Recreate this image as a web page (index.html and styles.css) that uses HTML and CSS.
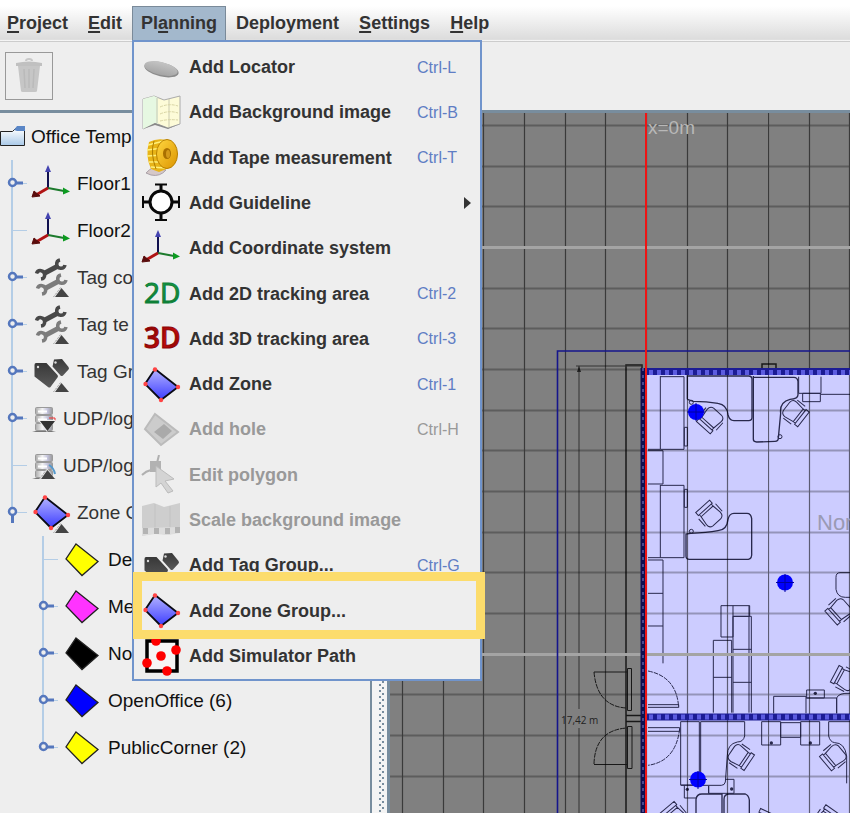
FILE: index.html
```html
<!DOCTYPE html>
<html lang="en">
<head>
<meta charset="utf-8">
<title>Office Template</title>
<link rel="stylesheet" href="styles.css">
</head>
<body>
<svg class="defs" width="0" height="0" aria-hidden="true">
  <defs>
    <linearGradient id="gZone" x1="0" y1="0" x2="0" y2="1"><stop offset="0" stop-color="#b4b4ff"/><stop offset="1" stop-color="#3c3cff"/></linearGradient>
    <linearGradient id="gDark" x1="0" y1="0" x2="0" y2="1"><stop offset="0" stop-color="#383838"/><stop offset="1" stop-color="#5a5a5a"/></linearGradient>
    <linearGradient id="gDisc" x1="0" y1="0" x2="0" y2="1"><stop offset="0" stop-color="#c4c4c4"/><stop offset="1" stop-color="#a4a4a4"/></linearGradient>
    <linearGradient id="gTape" x1="0" y1="0" x2="1" y2="1"><stop offset="0" stop-color="#ffd740"/><stop offset="1" stop-color="#dc9400"/></linearGradient>
    <linearGradient id="gGreen" x1="0" y1="0" x2="0" y2="1"><stop offset="0" stop-color="#1aa34a"/><stop offset="1" stop-color="#0a7430"/></linearGradient>
    <linearGradient id="gRed" x1="0" y1="0" x2="1" y2="1"><stop offset="0" stop-color="#700"/><stop offset=".6" stop-color="#c00a0a"/><stop offset="1" stop-color="#700"/></linearGradient>
    <linearGradient id="gFolder" x1="0" y1="0" x2="0" y2="1"><stop offset="0" stop-color="#fff"/><stop offset="1" stop-color="#a9c9e8"/></linearGradient>
    <linearGradient id="gSrv" x1="0" y1="0" x2="1" y2="0"><stop offset="0" stop-color="#aaa"/><stop offset=".4" stop-color="#f4f4f4"/><stop offset=".7" stop-color="#c4c4dc"/><stop offset="1" stop-color="#999"/></linearGradient>
    <symbol id="i-axes" viewBox="0 0 40 40">
      <path d="M17 24V6" stroke="#10104e" stroke-width="2"/><path d="M17 1l3 7h-6z" fill="#4444b0"/>
      <path d="M17 24l16 3" stroke="#1c7a2c" stroke-width="2"/><path d="M39 27.500l-7-4v7z" fill="#0c9a20"/>
      <path d="M17 24L5 31" stroke="#b01414" stroke-width="3"/><path d="M1 33l2-6 6 5z" fill="#5a0c0c" stroke="#5a0c0c"/>
    </symbol>
    <symbol id="i-zone" viewBox="0 0 40 40">
      <path d="M14 4L37 22 20 35 4 19z" fill="url(#gZone)" stroke="#0a0a14" stroke-width="1.800"/>
      <g fill="#f44"><circle cx="14" cy="4.500" r="2.200"/><circle cx="37" cy="22" r="2.200"/><circle cx="20" cy="35" r="2.200"/><circle cx="4.500" cy="19" r="2.200"/></g>
    </symbol>
    <symbol id="i-area" viewBox="0 0 40 40"><path d="M14 4L36 21.500 20 35.500 4 19z" stroke="#222" stroke-width="1.300"/></symbol>
    <symbol id="i-tags" viewBox="0 0 40 40">
      <path d="M5 11h10.500l11 12q1 1.200 0 2.500l-7 9.500q-1 1-2.500 0L3.500 24.500V13q0-2 1.500-2z" fill="url(#gDark)"/>
      <path d="M23 7.500l8-.5 6.500 8q1 1.500 0 2.500l-5.500 6q-1.500 1-2.500 0l-8-9z" fill="url(#gDark)"/>
      <circle cx="7" cy="15" r="1.200" fill="#ddd"/><circle cx="24.500" cy="10.500" r="1.200" fill="#ddd"/>
    </symbol>
    <symbol id="i-up" viewBox="0 0 16 11"><path d="M0 11L8 0l8 11z" fill="#eee"/><path d="M2 11l6.500-9L16 11z" fill="#444"/><path d="M.5 11L8 1" stroke="#888" stroke-dasharray="1 1"/></symbol>
    <g id="wrench" fill="none">
      <path d="M12 16L27 8" stroke-width="5"/>
      <path d="M29 2A4.200 4.200 0 1 0 34 7M10 21A4.200 4.200 0 1 0 5.500 15.500" stroke-width="3.500"/>
    </g>
    <symbol id="i-tools" viewBox="0 0 40 40">
      <use href="#wrench" stroke="#484848"/>
      <use href="#wrench" y="15" x="1" stroke="#7c7c7c"/>
      <use href="#i-up" x="22" y="28" width="16" height="11"/>
    </symbol>
    <symbol id="i-server" viewBox="0 0 26 40">
      <path d="M1 33q11-4 24 0z" fill="#777"/>
      <g fill="url(#gSrv)" stroke="#9a9a9a"><rect x="4.500" y="8.500" width="17" height="7" rx="1"/><rect x="4.500" y="16.500" width="17" height="7" rx="1"/><rect x="4.500" y="24.500" width="17" height="7" rx="1"/></g>
      <path d="M7 12.500h9M7 20.500h9" stroke="#fff" stroke-width="2"/>
    </symbol>
    <symbol id="h-shut" viewBox="0 0 31 47"><path d="M12 0v47" stroke="#b4cde6" stroke-width="2"/><path d="M20 23.500h7" stroke="#b4cde6"/><path d="M16 23h7" stroke="#5577bd" stroke-width="3"/><circle cx="12.500" cy="22.500" r="3.500" fill="#eee" stroke="#5577bd" stroke-width="2.500"/></symbol>
    <symbol id="h-leaf" viewBox="0 0 31 47"><path d="M12 0v47" stroke="#b4cde6" stroke-width="2"/><path d="M12 23.500h15" stroke="#b4cde6"/></symbol>
    <symbol id="h-last" viewBox="0 0 31 47"><path d="M12 0v22" stroke="#b4cde6" stroke-width="2"/><path d="M20 23.500h7" stroke="#b4cde6"/><path d="M16 23h7" stroke="#5577bd" stroke-width="3"/><circle cx="12.500" cy="22.500" r="3.500" fill="#eee" stroke="#5577bd" stroke-width="2.500"/></symbol>
    <symbol id="h-open" viewBox="0 0 31 47"><path d="M12 0v22" stroke="#b4cde6" stroke-width="2"/><path d="M16 23.500h11" stroke="#b4cde6"/><path d="M12.500 26v8" stroke="#5577bd" stroke-width="3"/><circle cx="12.500" cy="22.500" r="3.500" fill="#eee" stroke="#5577bd" stroke-width="2.500"/></symbol>
  </defs>
</svg>

<header>
  <nav class="menubar">
    <button type="button"><u>P</u>roject</button>
    <button type="button"><u>E</u>dit</button>
    <div class="open">
      <button type="button" aria-expanded="true">Pl<u>a</u>nning</button>
      <ul class="menu">
        <li><button type="button"><svg class="icon" viewBox="0 0 40 40"><ellipse cx="20.500" cy="21.500" rx="17.500" ry="7" transform="rotate(13 20.500 21.500)" fill="#8c8c8c"/><ellipse cx="20" cy="20.500" rx="17" ry="6.500" transform="rotate(13 20 20.500)" fill="url(#gDisc)"/></svg><span>Add Locator</span><kbd>Ctrl-L</kbd></button></li>
        <li><button type="button"><svg class="icon" viewBox="0 0 40 40"><path d="M2 6l11-3 10 4 16-4v28l-12 4-13-5-12 6z" fill="#fdfbd8" stroke="#aaa"/><path d="M2 6l11-3 4 2v26l-3-1-12 6z" fill="#e6f8e2"/><path d="M16 5v25M28 6v29" stroke="#c9c9b0"/><path d="M19 14q9-4 18-1M19 21q9-4 18-1M19 28q8-2 18-1" fill="none" stroke="#d8d4a4" stroke-dasharray="3 1"/><path d="M2 36l12-6 13 5 12-4-12 5-13-4z" fill="#888"/></svg><span>Add Background image</span><kbd>Ctrl-B</kbd></button></li>
        <li><button type="button"><svg class="icon" viewBox="0 0 40 40"><path d="M5 35q4-4 6-5l14 2q-6 7-15 5z" fill="#d5c8c8" stroke="#a9a0a8"/><path d="M8 4q8-4 17-2l3 28-10 4-8-3Q4 18 8 4z" fill="#e8b418"/><path d="M7 7l16-4M6 12l16-2M6 18l16-1M8 24l15 0M10 29l14 1" stroke="#fff07a" stroke-width="1.500"/><path d="M13 3q-4 12 2 28" fill="none" stroke="#ad7c00"/><ellipse cx="26" cy="16" rx="10.500" ry="14.500" fill="url(#gTape)" stroke="#b88000"/><ellipse cx="26" cy="15.500" rx="4" ry="5.500" fill="#a97000"/><ellipse cx="27" cy="16" rx="2" ry="4" fill="#d49a1a"/></svg><span>Add Tape measurement</span><kbd>Ctrl-T</kbd></button></li>
        <li><button type="button"><svg class="icon" viewBox="0 0 40 40"><g fill="none" stroke="#080808" stroke-width="3"><circle cx="20" cy="19" r="11" fill="#fff"/><path d="M20 1v7M20 30v7M2 19h7M31 19h7"/><path d="M14 1.500h12M14 37h12M2 13v12M38 13v12" stroke-width="2"/></g></svg><span>Add Guideline</span><svg class="arrow" viewBox="0 0 7 12"><path d="M0 0l7 6-7 6z" fill="#333"/></svg></button></li>
        <li><button type="button"><svg class="icon"><use href="#i-axes"/></svg><span>Add Coordinate system</span></button></li>
        <li><button type="button"><svg class="icon" viewBox="0 0 40 40"><text class="mark" x="3" y="29" fill="url(#gGreen)">2D</text></svg><span>Add 2D tracking area</span><kbd>Ctrl-2</kbd></button></li>
        <li><button type="button"><svg class="icon" viewBox="0 0 40 40"><text class="mark mark-bold" x="3" y="29" fill="url(#gRed)">3D</text></svg><span>Add 3D tracking area</span><kbd>Ctrl-3</kbd></button></li>
        <li><button type="button"><svg class="icon"><use href="#i-zone"/></svg><span>Add Zone</span><kbd>Ctrl-1</kbd></button></li>
        <li><button type="button" disabled><svg class="icon" viewBox="0 0 40 40"><path d="M14 4L37 22 20 35 4 19z" fill="#ccc" stroke="#bbb" stroke-width="2"/><path d="M23 14l8 7-9 8-9-7z" fill="#aaa"/></svg><span>Add hole</span><kbd>Ctrl-H</kbd></button></li>
        <li><button type="button" disabled><svg class="icon" viewBox="0 0 40 40"><path d="M1 20q4-4 9-5M16 8q1-4 2-8" fill="none" stroke="#b0b0b0" stroke-width="2"/><path d="M9 6h11v11H9z" fill="#b2b2b2"/><path d="M15 11l18 13-9 2 8 10-5 2-7-10-5 4z" fill="#d4d4d4" stroke="#bbb"/></svg><span>Edit polygon</span></button></li>
        <li><button type="button" disabled><svg class="icon" viewBox="0 0 40 40"><path d="M1 6l12-3 10 4 16-4v28l-12 4-13-2-13 3z" fill="#cecece"/><path d="M14 4v24M29 6v22" stroke="#c2c2c2"/><path d="M1 28l38-1v6l-12 2-13-1-13 2z" fill="#ddd"/><path d="M2 28h5v6H2zM13 28h5v6h-5zM24 28h5v6h-5zM34 27h5v6h-5z" fill="#b3b3b3"/></svg><span>Scale background image</span></button></li>
        <li><button type="button"><svg class="icon"><use href="#i-tags"/></svg><span>Add Tag Group...</span><kbd>Ctrl-G</kbd></button></li>
        <li class="marked"><button type="button"><svg class="icon"><use href="#i-zone"/></svg><span>Add Zone Group...</span></button></li>
        <li><button type="button"><svg class="icon" viewBox="0 0 40 40"><path d="M6 5h30v30H6z" fill="#f6f6f6" stroke="#000" stroke-width="3.500"/><g fill="#f00"><circle cx="15" cy="5" r="4.800"/><circle cx="35" cy="14" r="4.800"/><circle cx="20" cy="20" r="4.800"/><circle cx="6" cy="27" r="4.800"/><circle cx="26" cy="35" r="4.800"/></g></svg><span>Add Simulator Path</span></button></li>
      </ul>
    </div>
    <button type="button">Deployment</button>
    <button type="button"><u>S</u>ettings</button>
    <button type="button"><u>H</u>elp</button>
  </nav>
  <div class="toolbar">
    <button type="button" aria-label="Delete" disabled><svg width="30" height="36" viewBox="0 0 30 36"><path d="M4 8h22l-3 25q0 1-2 1H9q-2 0-2-1z" fill="#c6c6c6"/><path d="M2 5q13-3 26 0v3H2z" fill="#c0c0c0"/><path d="M12 3q0-2 3-2t3 2" fill="none" stroke="#c8c8c8" stroke-width="2"/><path d="M10 11l1 19M15 11v19M20 11l-1 19" stroke="#bababa" stroke-width="1.500"/></svg></button>
  </div>
</header>

<main>
  <aside>
    <ul class="tree">
      <li><div class="row"><svg class="folder" viewBox="0 0 25 22"><path d="M.5 5.500h12l3-3h9v17H.5z" fill="url(#gFolder)" stroke="#222"/><path d="M14 4l3-4h8v5h-8z" fill="#5a86c6"/></svg><span>Office Template</span></div>
        <ul>
          <li><div class="row"><svg class="handle"><use href="#h-shut"/></svg><svg class="icon"><use href="#i-axes"/></svg><span>Floor1</span></div></li>
          <li><div class="row"><svg class="handle"><use href="#h-leaf"/></svg><svg class="icon"><use href="#i-axes"/></svg><span>Floor2</span></div></li>
          <li><div class="row soft"><svg class="handle"><use href="#h-shut"/></svg><svg class="icon"><use href="#i-tools"/></svg><span>Tag co</span></div></li>
          <li><div class="row soft"><svg class="handle"><use href="#h-shut"/></svg><svg class="icon"><use href="#i-tools"/></svg><span>Tag te</span></div></li>
          <li><div class="row soft"><svg class="handle"><use href="#h-shut"/></svg><svg class="icon" viewBox="0 0 40 40"><use href="#i-tags"/><use href="#i-up" x="22" y="29" width="16" height="11"/></svg><span>Tag Groups</span></div></li>
          <li><div class="row soft"><svg class="handle"><use href="#h-shut"/></svg><svg class="icon small" viewBox="0 0 26 40"><use href="#i-server"/><path d="M18 19h6v3" stroke="#e33" fill="none"/><path d="M7 21h18l-9 12z" fill="#eee"/><path d="M9 22h15l-7.500 10z" fill="#333"/></svg><span>UDP/logging</span></div></li>
          <li><div class="row soft"><svg class="handle"><use href="#h-leaf"/></svg><svg class="icon small" viewBox="0 0 26 40"><use href="#i-server"/><path d="M18 19q5 3 6 9" fill="none" stroke="#59c" stroke-width="2"/><use href="#i-up" x="8" y="22" width="16" height="11"/></svg><span>UDP/logging</span></div></li>
          <li><div class="row soft"><svg class="handle"><use href="#h-open"/></svg><svg class="icon" viewBox="0 0 40 40"><use href="#i-zone"/><use href="#i-up" x="22" y="29" width="16" height="11"/></svg><span>Zone Groups</span></div>
            <ul class="inner">
              <li><div class="row"><svg class="handle"><use href="#h-leaf"/></svg><svg class="icon yellow"><use href="#i-area"/></svg><span>Default</span></div></li>
              <li><div class="row"><svg class="handle"><use href="#h-shut"/></svg><svg class="icon pink"><use href="#i-area"/></svg><span>Meeting</span></div></li>
              <li><div class="row"><svg class="handle"><use href="#h-shut"/></svg><svg class="icon black"><use href="#i-area"/></svg><span>NoAccess</span></div></li>
              <li><div class="row"><svg class="handle"><use href="#h-shut"/></svg><svg class="icon blue"><use href="#i-area"/></svg><span>OpenOffice (6)</span></div></li>
              <li><div class="row"><svg class="handle"><use href="#h-last"/></svg><svg class="icon yellow"><use href="#i-area"/></svg><span>PublicCorner (2)</span></div></li>
            </ul>
          </li>
        </ul>
      </li>
    </ul>
  </aside>
  <div class="splitter"></div>
  <section class="plan">
    <svg class="canvas" role="img" aria-label="Floor plan">
      <defs>
        <pattern id="grid" patternUnits="userSpaceOnUse" x="645" y="246.500" width="122" height="122"><path d="M1.500 0V122M42.500 0V122M82.500 0V122M0 1H122M0 42H122M0 82H122" stroke="#000" stroke-opacity=".55" stroke-width="1.200"/></pattern>
        <g id="chair" fill="none"><path d="M-14-6q0-7 6-8H8q7 1 6 8L12 8H-12zM-14 12H14V18H-14zM-12 8V12M12 8V12M-17-7V8M17-7V8"/></g>
      </defs>
      <g transform="translate(-390 -113)">
        <rect x="646" y="371" width="3000" height="3000" fill="#ccf"/>
        <!-- furniture, drawn at three units per pixel -->
        <g transform="translate(640 340) scale(.33333)" fill="none" stroke="#28284c" stroke-width="3">
          <path d="M61 108V328H24M61 110H132V328H61M24 332H69V432H24M61 435V653M61 436H132V653H24M24 660H69V970M24 760H69M24 858H69"/>
          <path d="M142 178V108H326q10 0 10 10V232q0 10-10 10H282q-14 0-18-18-3-30-30-34Q200 184 160 184l-18-6" stroke-width="4"/>
          <path d="M340 108V298q0 8 10 8L405 304q10 0 10-10L422 220q-4-34 28-42 24-2 24-14V124q-2-12-12-12H340" stroke-width="4"/>
          <path d="M476 110V160H543V110M488 160H541V185H488zM543 163H640M133 262H142V318H133zM133 448H142V502H133z"/>
          <path d="M138 582V648q0 10 10 10H325q12-2 10-20V536q-2-16-14-16H282q-14 0-18 18-3 32-30 34Q200 578 152 580z" stroke-width="4"/>
          <circle cx="154" cy="187" r="6"/><circle cx="420" cy="290" r="6"/><circle cx="154" cy="574" r="6"/>
          <path d="M640 698H600q-12 0-12 14v36q4 24 28 24h24"/>
          <g stroke-width="1.500">
            <use href="#chair" transform="translate(214 236) rotate(42) scale(2)"/>
            <use href="#chair" transform="translate(462 216) rotate(-52) scale(2)"/>
            <use href="#chair" transform="translate(212 526) rotate(138) scale(2)"/>
            <use href="#chair" transform="translate(600 810) rotate(48) scale(2)"/>
            <use href="#chair" transform="translate(616 1018) rotate(118) scale(2)"/>
          </g>
        </g>
        <g transform="translate(640 570) scale(.33333)" fill="none" stroke="#28284c" stroke-width="3">
          <path d="M243 107H279V201H243zM279 107H329V139H279M279 139H334V428M279 139V428M327 107V428M279 238H334M279 337H334M220 211H275V428M220 211V428M220 322H275"/>
          <path d="M24 303Q110 320 116 412M119 476Q108 574 24 586" stroke-dasharray="14 3"/>
          <path d="M24 412H116V404H24M24 473H119V484H24"/>
          <path d="M401 430V379H498V430M500 360H553V384H500zM498 384H590V430M590 430V384q6-16 40-14"/>
          <path d="M122 455H178V645H122zM182 455V645M182 455H314V498q-4 18-22 18-30 6-30 40L256 636q-2 10-12 10H122M258 628H282V670H206V648M133 646V684H168M206 648V670"/>
          <path d="M168 760V688q2-16 18-16H246V760M252 760V688q0-16 16-16H316q10 4 12 18V760" stroke-width="4"/>
          <path d="M365 455H422V525H365zM422 458H482V502H422zM482 455H539V525H482zM566 455V498q4 18 18 20 30 0 36 40V640M566 455H640"/>
          <g stroke-width="1.500">
            <use href="#chair" transform="translate(298 558) rotate(-56) scale(2)"/>
            <use href="#chair" transform="translate(584 558) rotate(50) scale(2)"/>
            <use href="#chair" transform="translate(104 740) rotate(140) scale(2)"/>
            <use href="#chair" transform="translate(372 760) rotate(205) scale(2)"/>
            <use href="#chair" transform="translate(560 750) rotate(215) scale(2)"/>
          </g>
          <g fill="#28284c" stroke="none"><circle cx="526" cy="370" r="5"/><circle cx="394" cy="519" r="5"/><circle cx="511" cy="519" r="5"/><circle cx="142" cy="658" r="5"/><circle cx="275" cy="657" r="5"/></g>
        </g>
        <!-- outer wall, doors and dimension line -->
        <g fill="none" stroke="#181818" stroke-width="1.500">
          <path d="M626 813V365H642V813M626 715.500H642M626 721.500H642M762 369V364H776V369"/>
          <path d="M594 672H627M627.500 668.500H631.500V710.500H627.500zM594 764.500H627M627.500 726.500H632V768.500H627.500z" stroke-width="1"/>
          <path d="M594 672Q597 706 626 708M594 764Q595 730 627 728" stroke-width="1" stroke-dasharray="5 1"/>
          <path d="M579 366V709M579 728V813M576 366H642" stroke="#333" stroke-width="1"/><path d="M579 366l-2 6h4z" fill="#222" stroke="none"/>
        </g>
        <rect x="387" y="110" width="3000" height="3000" fill="url(#grid)"/>
        <path d="M390 247.500H3390M390 654.500H3390" stroke="#a4a4a4" stroke-width="3"/>
        <path d="M557.500 3000V351H3390" fill="none" stroke="#15158c" stroke-width="1.600"/>
        <path d="M643.500 368V3000" stroke="#101050" stroke-width="6"/><path d="M643 368V3000" stroke="#4a4a90" stroke-width="2" stroke-dasharray="3 4"/>
        <path d="M647 371.500H3390M647 717H3390" stroke="#1c1c94" stroke-width="7"/><path d="M649 372.500H3390M649 717H3390" stroke="#5c5ce0" stroke-width="5" stroke-dasharray="4 4"/>
        <path d="M646 113V3000" stroke="#f01414" stroke-width="2"/>
        <g fill="#00f"><circle cx="696" cy="412" r="8"/><circle cx="785" cy="582.500" r="8"/><circle cx="698" cy="779.500" r="8"/></g>
        <path d="M687 412h18M696 403v18M776 582.500h18M785 574v18M689 779.500h18M698 771v18" stroke="#0000a0"/>
        <text class="axis" x="648" y="134">x=0m</text>
        <text class="dim" x="561" y="724">17,42 m</text>
        <text class="zone-name" x="817" y="530">Nor</text>
      </g>
    </svg>
  </section>
</main>
</body>
</html>
```
FILE: styles.css
```css
* { box-sizing: border-box; }

body {
  margin: 0;
  height: 100vh;
  display: flex;
  flex-direction: column;
  overflow: hidden;
  background: #eee;
  color: #333;
  font-family: "Liberation Sans", Arial, sans-serif;
  font-size: 19px;
}

.defs { position: absolute; }

button {
  margin: 0;
  border: 0;
  background: none;
  color: inherit;
  font: bold 18px "Liberation Sans", Arial, sans-serif;
}

ul { margin: 0; padding: 0; list-style: none; }

svg { flex: none; display: block; }

.menubar {
  display: flex;
  padding-top: 6px;
  height: 42px;
  background: linear-gradient(#fff 15%, #dcdcdc 96%, #fff);
  border-bottom: 1px solid #ccc;
}

.menubar > button,
.open > button {
  height: 34px;
  padding: 0 10px;
}

.menubar > button:first-child { padding-left: 7px; }

.menubar u {
  text-decoration-thickness: 2px;
  text-underline-offset: 2px;
}

.open { position: relative; }

.open > button {
  background: #a3b8cc;
  border: solid #7a8a99;
  border-width: 1px 1px 0;
  padding: 0 8px;
}

.menu {
  position: absolute;
  z-index: 2;
  top: 34px;
  left: 0;
  width: 350px;
  min-height: 641px;
  padding: 3px 0 0;
  display: grid;
  grid-template-rows: repeat(14, 1fr);
  background: #eee;
  border: 2px solid #7094cc;
}

.menu li { position: relative; display: flex; }

.menu button {
  flex: 1;
  display: flex;
  align-items: center;
  gap: 8px;
  padding: 0 9px 0 7px;
  text-align: left;
}

.menu span { flex: 1; white-space: nowrap; }

.menu kbd {
  width: 54px;
  color: #5f7dc4;
  font: 16px "Liberation Sans", Arial, sans-serif;
}

.menu button:disabled,
.menu button:disabled kbd { color: #999; }

.menu .marked { z-index: 1; }

.menu .marked::before {
  content: "";
  position: absolute;
  z-index: -1;
  inset: -16px -5px -5px -1px;
  background: #eee;
  border: 9px solid #fcdc6c;
}

.icon { width: 40px; height: 40px; }

.icon.small { width: 26px; }

.arrow { width: 7px; height: 12px; }

.mark { font: 28px "Open Sans", "Noto Sans", sans-serif; stroke: #0d8038; stroke-width: 1px; }

.mark-bold { font-weight: 600; stroke: #8c0606; }

.toolbar {
  padding: 10px 5px;
  border-bottom: 3px solid #788d9e;
}

.toolbar button {
  display: grid;
  place-items: center;
  width: 48px;
  height: 48px;
  padding: 0;
  border: 1px solid #999;
}

main {
  flex: 1;
  min-height: 0;
  display: grid;
  grid-template-columns: 370px 20px 1fr;
}

aside { overflow: hidden; color: #111; }

.row {
  display: flex;
  align-items: center;
  gap: 6px;
  height: 47px;
  white-space: nowrap;
}

.soft { color: #333; }

.handle { width: 31px; height: 47px; margin-right: -6px; }

.folder { width: 25px; height: 22px; }

.inner { padding-left: 31px; }

.yellow { fill: #ff0; }
.pink { fill: #f3f; }
.black { fill: #000; }
.blue { fill: #00f; }

.splitter {
  border: solid #788d9e;
  border-width: 0 3px 0 2px;
  background:
    radial-gradient(circle at 8px 2px, #788d9e 1px, transparent 1px) 0 0 / 15px 6px,
    radial-gradient(circle at 11px 5px, #788d9e 1px, transparent 1px) 0 0 / 15px 6px,
    #f4f4f4;
}

.plan { background: gray; overflow: hidden; }

.canvas { width: 100%; height: 100%; }

.axis { font: 19px "Liberation Sans", Arial, sans-serif; fill: #b8b8b8; }

.dim { font: 10px "Open Sans", "Noto Sans", sans-serif; fill: #222; }

.zone-name { font: 22px "Liberation Sans", Arial, sans-serif; fill: #9a9ab4; }
```
